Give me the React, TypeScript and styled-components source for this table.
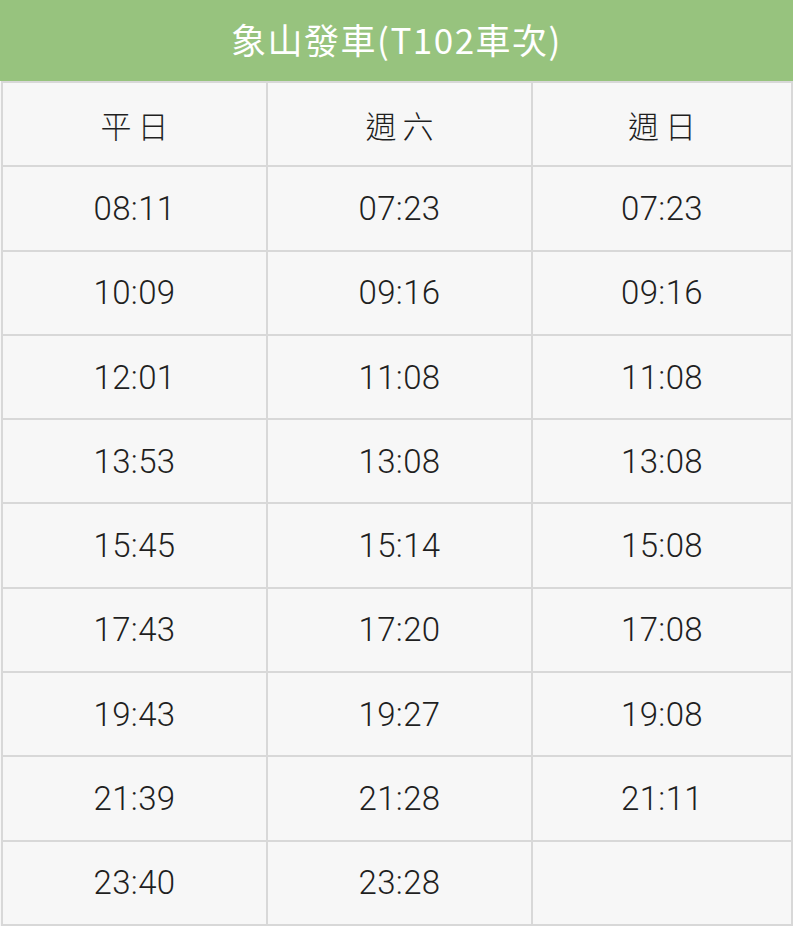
import styled, { createGlobalStyle } from "styled-components";

const GlobalStyle = createGlobalStyle`
  html, body {
    margin: 0;
    padding: 0;
    background: #f7f7f7;
  }
  body {
    font-family: Roboto, "Noto Sans CJK TC", sans-serif;
  }
`;

const Wrapper = styled.div`
  width: 793px;
  height: 926px;
  overflow: hidden;
`;

const Title = styled.h1`
  margin: 0;
  height: 81px;
  display: flex;
  align-items: center;
  justify-content: center;
  background-color: #97c37e;
  color: #ffffff;
  font-family: "Noto Sans CJK TC", sans-serif;
  font-weight: 400;
  font-size: 35px;
  letter-spacing: 1.5px;
  padding-bottom: 4px;
  box-sizing: border-box;
`;

const Grid = styled.div`
  margin-left: 1px;
  display: grid;
  grid-template-columns: 263px 263px 1fr;
  grid-auto-rows: 82.3px;
  gap: 2px;
  padding: 2px;
  background-color: #d8d8d8;
`;

const Cell = styled.div<{ $head?: boolean }>`
  display: flex;
  align-items: center;
  justify-content: center;
  background-color: #f7f7f7;
  color: #1f1f1f;
  font-weight: 300;
  font-size: ${(p) => (p.$head ? "31px" : "33px")};
  letter-spacing: ${(p) => (p.$head ? "6px" : "0.4px")};
  font-family: ${(p) =>
    p.$head
      ? `"Noto Sans CJK TC", sans-serif`
      : `Roboto, "Noto Sans CJK TC", sans-serif`};
  padding-left: ${(p) => (p.$head ? "6px" : "0")};
`;

const heads = ["平日", "週六", "週日"];

const times = [
  ["08:11", "07:23", "07:23"],
  ["10:09", "09:16", "09:16"],
  ["12:01", "11:08", "11:08"],
  ["13:53", "13:08", "13:08"],
  ["15:45", "15:14", "15:08"],
  ["17:43", "17:20", "17:08"],
  ["19:43", "19:27", "19:08"],
  ["21:39", "21:28", "21:11"],
  ["23:40", "23:28", ""],
];

function App() {
  return (
    <>
      <GlobalStyle />
      <Wrapper>
        <Title>象山發車(T102車次)</Title>
        <Grid>
          {heads.map((h) => (
            <Cell $head key={h}>
              {h}
            </Cell>
          ))}
          {times.map((row, i) =>
            row.map((t, j) => <Cell key={`${i}-${j}`}>{t}</Cell>)
          )}
        </Grid>
      </Wrapper>
    </>
  );
}

export default App;
